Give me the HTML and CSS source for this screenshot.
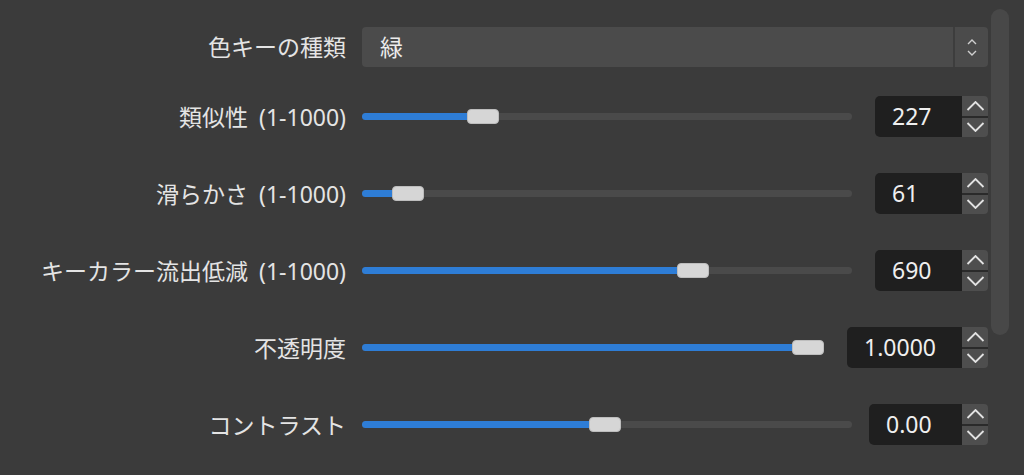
FILE: index.html
```html
<!doctype html>
<html>
  <head>
    <meta charset="utf-8">
    <title>クロマキー</title>
    <link rel="stylesheet" href="styles.css">
  </head>
  <body>
    <div class="props">
      <div class="row row-first">
        <div class="name">色キーの種類</div>
        <div class="combo">
          <span class="combo-text">緑</span>
          <span class="combo-arrows">
            <svg width="10" height="6" viewBox="0 0 10 6"><polyline points="1,5 5,1 9,5" /></svg>
            <svg width="10" height="6" viewBox="0 0 10 6"><polyline points="1,1 5,5 9,1" /></svg>
          </span>
        </div>
      </div>

      <div class="row">
        <div class="name">類似性 (1-1000)</div>
        <div class="control">
          <div class="slider">
            <div class="fill" style="width: 121px"></div>
            <div class="handle" style="left: 105px"></div>
          </div>
          <div class="spin spin-sm">
            <span class="spin-value">227</span>
            <div class="spin-buttons">
              <button class="spin-btn up"><svg viewBox="0 0 18 10"><polyline points="1,9 9,1 17,9" /></svg></button>
              <button class="spin-btn down"><svg viewBox="0 0 18 10"><polyline points="1,1 9,9 17,1" /></svg></button>
            </div>
          </div>
        </div>
      </div>

      <div class="row">
        <div class="name">滑らかさ (1-1000)</div>
        <div class="control">
          <div class="slider">
            <div class="fill" style="width: 46px"></div>
            <div class="handle" style="left: 30px"></div>
          </div>
          <div class="spin spin-sm">
            <span class="spin-value">61</span>
            <div class="spin-buttons">
              <button class="spin-btn up"><svg viewBox="0 0 18 10"><polyline points="1,9 9,1 17,9" /></svg></button>
              <button class="spin-btn down"><svg viewBox="0 0 18 10"><polyline points="1,1 9,9 17,1" /></svg></button>
            </div>
          </div>
        </div>
      </div>

      <div class="row">
        <div class="name">キーカラー流出低減 (1-1000)</div>
        <div class="control">
          <div class="slider">
            <div class="fill" style="width: 331px"></div>
            <div class="handle" style="left: 315px"></div>
          </div>
          <div class="spin spin-sm">
            <span class="spin-value">690</span>
            <div class="spin-buttons">
              <button class="spin-btn up"><svg viewBox="0 0 18 10"><polyline points="1,9 9,1 17,9" /></svg></button>
              <button class="spin-btn down"><svg viewBox="0 0 18 10"><polyline points="1,1 9,9 17,1" /></svg></button>
            </div>
          </div>
        </div>
      </div>

      <div class="row">
        <div class="name">不透明度</div>
        <div class="control">
          <div class="slider">
            <div class="fill" style="width: 446px"></div>
            <div class="handle" style="left: 430px"></div>
          </div>
          <div class="spin spin-lg">
            <span class="spin-value">1.0000</span>
            <div class="spin-buttons">
              <button class="spin-btn up"><svg viewBox="0 0 18 10"><polyline points="1,9 9,1 17,9" /></svg></button>
              <button class="spin-btn down"><svg viewBox="0 0 18 10"><polyline points="1,1 9,9 17,1" /></svg></button>
            </div>
          </div>
        </div>
      </div>

      <div class="row">
        <div class="name">コントラスト</div>
        <div class="control">
          <div class="slider">
            <div class="fill" style="width: 243px"></div>
            <div class="handle" style="left: 227px"></div>
          </div>
          <div class="spin spin-md">
            <span class="spin-value">0.00</span>
            <div class="spin-buttons">
              <button class="spin-btn up"><svg viewBox="0 0 18 10"><polyline points="1,9 9,1 17,9" /></svg></button>
              <button class="spin-btn down"><svg viewBox="0 0 18 10"><polyline points="1,1 9,9 17,1" /></svg></button>
            </div>
          </div>
        </div>
      </div>
    </div>

    <div class="scrollbar"></div>
  </body>
</html>
```

FILE: styles.css
```css
body {
    margin: 0;
    background: #3b3b3b;
    font-family: "Noto Sans", "Noto Sans CJK JP", sans-serif;
    color: #e4e4e4;
    overflow: hidden;
}

.props {
    width: 988px;
    padding-top: 16px;
}

.row {
    display: grid;
    grid-template-columns: 346px 1fr;
    column-gap: 16px;
    align-items: center;
    height: 77px;
}

.row-first {
    height: 62px;
}

.name {
    text-align: right;
    font-size: 23px;
    line-height: 30px;
    word-spacing: 5px;
    white-space: nowrap;
}

/* combo box */
.combo {
    display: flex;
    height: 40px;
    background: #4b4b4b;
    border-radius: 4px;
}

.combo-text {
    flex: 1;
    padding-left: 18px;
    font-size: 23px;
    line-height: 40px;
    color: #ececec;
}

.combo-arrows {
    width: 33px;
    border-left: 2px solid #3d3d3d;
    display: flex;
    flex-direction: column;
    align-items: center;
    justify-content: center;
    gap: 5px;
}

.combo-arrows polyline {
    fill: none;
    stroke: #cfcfcf;
    stroke-width: 1.4;
}

/* slider + spin box */
.control {
    display: flex;
    align-items: center;
}

.slider {
    position: relative;
    flex: 1;
    height: 7px;
    background: #4a4a4a;
    border-radius: 4px;
}

.fill {
    position: absolute;
    left: 0;
    top: 0;
    bottom: 0;
    background: #2e7dd6;
    border-radius: 4px;
}

.handle {
    position: absolute;
    top: -4px;
    width: 32px;
    height: 15px;
    box-sizing: border-box;
    background: #d6d6d6;
    border: 1px solid #bdbdbd;
    border-radius: 4px;
}

.spin {
    display: flex;
    height: 41px;
}

.spin-sm {
    margin-left: 23px;
}

.spin-md {
    margin-left: 17px;
}

.spin-lg {
    margin-left: 23px;
}

.spin-sm .spin-value {
    width: 70px;
}

.spin-md .spin-value {
    width: 76px;
}

.spin-lg .spin-value {
    width: 98px;
}

.spin-value {
    background: #1f1f1f;
    border-radius: 5px 0 0 5px;
    padding-left: 17px;
    font-size: 23px;
    line-height: 41px;
    color: #efefef;
}

.spin-buttons {
    width: 26px;
    display: flex;
    flex-direction: column;
}

.spin-btn {
    flex: 1;
    margin: 0;
    padding: 0;
    border: 0;
    background: #4e4e4e;
    display: flex;
    align-items: center;
    justify-content: center;
}

.spin-btn.up {
    border-radius: 0 4px 0 0;
    border-bottom: 2px solid #2a2a2a;
}

.spin-btn.down {
    border-radius: 0 0 4px 0;
}

.spin-btn svg {
    width: 19px;
    height: 10px;
}

.spin-btn polyline {
    fill: none;
    stroke: #e2e2e2;
    stroke-width: 1.8;
}

/* overlay scrollbar */
.scrollbar {
    position: absolute;
    left: 991px;
    top: 9px;
    width: 18px;
    height: 326px;
    background: #484848;
    border-radius: 9px;
}
```
